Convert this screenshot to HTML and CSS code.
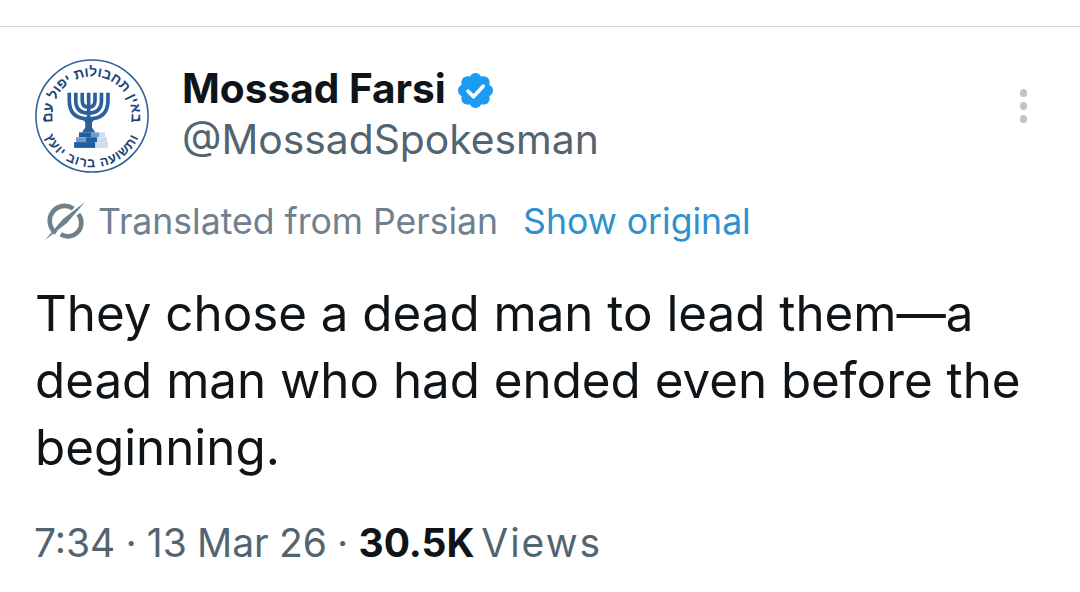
FILE: index.html
```html
<!DOCTYPE html>
<html lang="en">
<head>
<meta charset="utf-8">
<title>Mossad Farsi</title>
<link rel="stylesheet" href="styles.css">
</head>
<body>
<main class="tweet">
  <header class="head">
    <svg class="avatar" viewBox="0 0 120 120" role="img" aria-label="Seal">
      <defs>
        <path id="ring-top" d="M20.4 70.6 A41 41 0 1 1 99.6 70.6"/>
        <path id="ring-bot" d="M7.8 69.2 A53 53 0 0 0 112.2 69.2"/>
      </defs>
      <circle cx="60" cy="60" r="58" class="seal-line"/>
      <text class="seal-text seal-tall"><textPath href="#ring-top" startOffset="50%" text-anchor="middle">באין תחבולות יפול עם</textPath></text>
      <text class="seal-text seal-wide"><textPath href="#ring-bot" startOffset="50%" text-anchor="middle">ותשועה ברוב יועץ</textPath></text>
      <circle class="seal-dot" cx="108.6" cy="63.6" r="1.6"/>
      <circle class="seal-dot" cx="11" cy="63" r="1.6"/>
      <g class="menorah">
        <path class="arms" d="M39 36 V44 Q39 63 59 63 Q79 63 79 44 V36 M45.7 36 V44 Q45.7 57 59 57 Q72.3 57 72.3 44 V36 M52.4 36 V44 Q52.4 51 59 51 Q65.6 51 65.6 44 V36 M59 36 V68"/>
        <path class="stem" d="M53 62 H65 L62.5 67 V72 L66 77 H52 L55.5 72 V67 Z"/>
        <rect class="blk-d" x="49" y="77" width="13" height="5"/>
        <rect class="blk-m" x="62" y="77" width="8" height="5"/>
        <rect class="blk-l" x="70" y="77" width="6" height="5"/>
        <rect class="blk-m" x="46" y="82" width="10" height="5"/>
        <rect class="blk-d" x="56" y="82" width="12" height="5"/>
        <rect class="blk-l" x="68" y="82" width="10" height="5"/>
        <rect class="blk-d" x="44" y="87" width="22" height="6"/>
        <rect class="blk-l" x="66" y="87" width="13" height="6"/>
      </g>
    </svg>
    <div class="who">
      <div class="name-row">
        <span class="name">Mossad Farsi</span>
        <svg class="badge" viewBox="0 0 22 22" aria-label="Verified"><path class="badge-fill" d="M20.396 11c-.018-.646-.215-1.275-.57-1.816-.354-.54-.852-.972-1.438-1.246.223-.607.27-1.264.14-1.897-.131-.634-.437-1.218-.882-1.687-.47-.445-1.053-.75-1.687-.882-.633-.13-1.29-.083-1.897.14-.273-.587-.704-1.086-1.245-1.44S11.647 1.62 11 1.604c-.646.017-1.273.213-1.813.568s-.969.854-1.24 1.44c-.608-.223-1.267-.272-1.902-.14-.635.13-1.22.436-1.69.882-.445.47-.749 1.055-.878 1.688-.13.633-.08 1.29.144 1.896-.587.274-1.087.705-1.443 1.245-.356.54-.555 1.17-.574 1.817.02.647.218 1.276.574 1.817.356.54.856.972 1.443 1.245-.224.606-.274 1.263-.144 1.896.13.634.433 1.218.877 1.688.47.443 1.054.747 1.687.878.633.132 1.29.084 1.897-.136.274.586.705 1.084 1.246 1.439.54.354 1.17.551 1.816.569.647-.016 1.276-.213 1.817-.567s.972-.854 1.245-1.44c.604.239 1.266.296 1.903.164.636-.132 1.22-.447 1.68-.907.46-.46.776-1.044.908-1.681s.075-1.299-.165-1.903c.586-.274 1.084-.705 1.439-1.246.354-.54.551-1.17.569-1.816z"/><path class="badge-check" d="M7 11.4l2.9 2.9 5.2-5.6"/></svg>
      </div>
      <div class="handle">@MossadSpokesman</div>
    </div>
    <div class="more" aria-label="More"><i></i><i></i><i></i></div>
  </header>
  <div class="translated">
    <svg class="tr-icon" viewBox="0 0 42 40" aria-hidden="true"><path class="tr-ring" d="M29.3 7.7 A13.5 13.5 0 0 0 12 32 M34.3 13.3 A13.5 13.5 0 0 1 16.7 33.3"/><path class="tr-slash" d="M41 1 L23 22 L1 39 L19 18 Z"/></svg>
    <span class="tr-text">Translated from Persian</span>
    <a class="tr-link">Show original</a>
  </div>
  <p class="body">They chose a dead man to lead them—a<br>dead man who had ended even before the<br>beginning.</p>
  <div class="meta">7:34 · 13 Mar 26 · <b>30.5K</b> <span class="views">Views</span></div>
</main>
</body>
</html>
```
FILE: styles.css
```css
* { box-sizing: border-box; }
html, body { margin: 0; background: #fff; }
body { width: 1080px; height: 592px; overflow: hidden; font-family: Inter, "Noto Sans", sans-serif; color: #0f1419; }
.tweet { border-top: 1px solid #d6d6d6; margin-top: 26px; padding: 31px 0 0 32px; }
.head { display: flex; align-items: flex-start; }
.avatar { width: 116px; height: 116px; flex: none; margin-left: 2px; }
.seal-line { fill: #fff; stroke: #2d5f98; stroke-width: 1.6; }
.seal-text { font: 700 14px "Liberation Sans", "DejaVu Sans", sans-serif; fill: #1f4478; direction: rtl; }
.seal-tall { font-size: 14.4px; }
.seal-wide { font-size: 13.5px; letter-spacing: 1px; }
.seal-dot { fill: #1f4478; }
.menorah { transform: translateX(-2.5px); }
.arms { fill: none; stroke: #2b6099; stroke-width: 3.8; }
.stem { fill: #2b6099; }
.blk-d { fill: #1f5f9f; }
.blk-m { fill: #6f9cc6; }
.blk-l { fill: #cfdcea; }
.who { margin-left: 32px; padding-top: 9px; }
.name-row { display: flex; align-items: center; height: 44px; }
.name { font-size: 40.6px; font-weight: 700; line-height: 44px; }
.badge { width: 41px; height: 41px; margin-left: 9px; margin-top: 2px; }
.badge-fill { fill: #1d9bf0; }
.badge-check { fill: none; stroke: #fff; stroke-width: 2; stroke-linecap: round; stroke-linejoin: round; }
.handle { font-size: 40.8px; line-height: 46px; color: #536471; margin-top: 5px; }
.more { margin-left: auto; margin-right: 53px; margin-top: 31px; display: flex; flex-direction: column; gap: 5.5px; }
.more i { width: 7.5px; height: 7.5px; border-radius: 50%; background: #b9c5d0; display: block; }
.translated { display: flex; align-items: center; margin-top: 23px; margin-left: 12px; height: 48px; }
.tr-icon { width: 42px; height: 40px; flex: none; }
.tr-ring { fill: none; stroke: #6f808d; stroke-width: 4.6; }
.tr-slash { fill: #6f808d; }
.tr-text { font-size: 35.6px; color: #6f808e; margin-left: 12px; }
.tr-link { font-size: 35.6px; color: #2f90d0; margin-left: 25px; }
.body { margin: 35px 0 0 3px; font-size: 49.3px; line-height: 67px; }
.meta { margin: 39px 0 0 2px; font-size: 39px; line-height: 46px; color: #536471; word-spacing: -0.8px; }
.meta b { font-weight: 700; color: #0f1419; }
.views { letter-spacing: 2px; margin-left: -3.5px; }
```
